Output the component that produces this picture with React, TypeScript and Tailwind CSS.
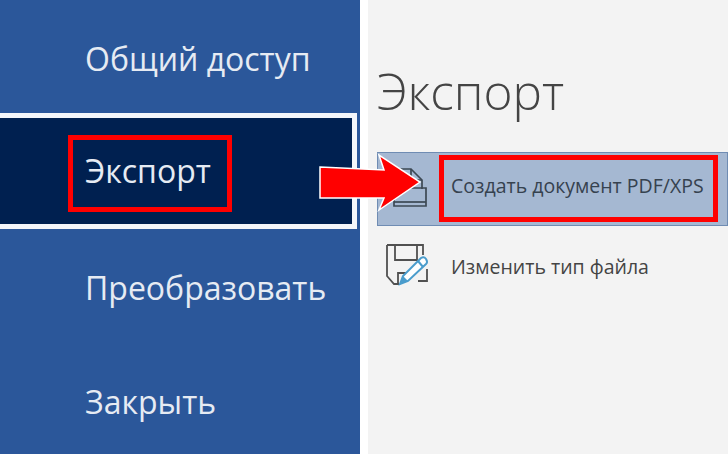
import React from 'react'

const font = { fontFamily: '"Open Sans", "Noto Sans", sans-serif' }

function PdfIcon() {
  return (
    <svg width="50" height="50" viewBox="0 0 50 50" fill="none" stroke="#3c4854" strokeWidth="1.7">
      <path d="M10 20V5h13l11 11v9" />
      <path d="M23 5v11h11" />
      <path d="M6 24h32v18H6z" />
      <path d="M6 38h32" />
    </svg>
  )
}

function FileTypeIcon() {
  return (
    <svg width="48" height="48" viewBox="0 0 48 48" fill="none">
      <path d="M2 2H38V12M2 2V33L9 41H14" stroke="#505050" strokeWidth="1.8" />
      <path d="M10 2V17H32V2" stroke="#505050" strokeWidth="1.8" />
      <path d="M13 41V30H27M42 26V38H33" stroke="#505050" strokeWidth="1.8" />
      <path d="M15 41L18 33L36 15Q39 13 41 16Q43 19 41 21L23 38Z" fill="#fff" stroke="#4a9ccc" strokeWidth="2" />
      <path d="M15 41L18 33L23 38Z" fill="#4a9ccc" />
      <path d="M33 18L38 24" stroke="#4a9ccc" strokeWidth="2" />
    </svg>
  )
}

export default function App() {
  return (
    <div className="flex w-[728px] h-[454px] overflow-hidden bg-white" style={font}>
      <div className="w-[360px] shrink-0 bg-[#2b579a] flex flex-col text-[32px] font-medium text-[#e6ebf3]">
        <div className="h-[113px] shrink-0 pt-[4px] pl-[85px] flex items-center">Общий доступ</div>
        <div className="h-[116px] shrink-0 mr-[3px] border-y-[5px] border-r-[5px] border-[#f4f6fa] bg-[#002050] pl-[85px] flex items-center">Экспорт</div>
        <div className="h-[117px] shrink-0 pl-[85px] flex items-center">Преобразовать</div>
        <div className="h-[112px] shrink-0 pl-[85px] flex items-center">Закрыть</div>
      </div>
      <div className="ml-[8px] flex-1 bg-[#f3f3f3] pl-[9px] flex flex-col">
        <div className="h-[152px] shrink-0 pt-[55px] text-[49.5px] leading-[72px] font-light text-[#444]">Экспорт</div>
        <div className="h-[74px] shrink-0 bg-[#a5b8d2] border border-[#6f8cb3] flex items-center pl-[10px] gap-[13px] text-[19.5px] text-[#36424f]">
          <PdfIcon />
          <span className="-mt-[6px]">Создать документ PDF/XPS</span>
        </div>
        <div className="flex items-center pl-[8px] gap-[18px] mt-[17px] text-[19.5px] text-[#444]">
          <FileTypeIcon />
          <span>Изменить тип файла</span>
        </div>
      </div>
      <div className="absolute left-[68px] top-[135px] w-[164px] h-[77px] border-[5px] border-[#ff0000]" />
      <div className="absolute left-[439px] top-[155px] w-[279px] h-[67px] border-[5px] border-[#ff0000]" />
      <svg className="absolute left-[316px] top-[152px]" width="108" height="66" viewBox="0 0 108 66">
        <path d="M4 15L68 18L63 3L104 30L63 58L68 46L4 46z" fill="#ff0000" stroke="#ffffff" strokeWidth="1.5" />
      </svg>
    </div>
  )
}
